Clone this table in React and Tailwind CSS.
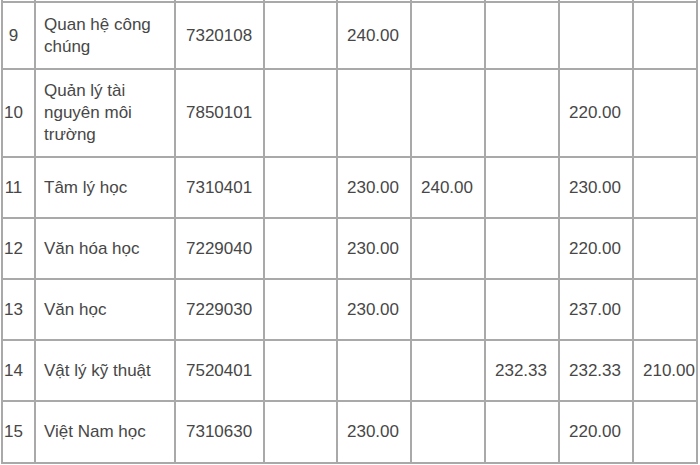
export default function App() {
  const rows = [
    { n: "9", name: ["Quan hệ công", "chúng"], code: "7320108", v: ["", "240.00", "", "", "", ""], h: "h-[65px]" },
    { n: "10", name: ["Quản lý tài", "nguyên môi", "trường"], code: "7850101", v: ["", "", "", "", "220.00", ""], h: "h-[86px]" },
    { n: "11", name: ["Tâm lý học"], code: "7310401", v: ["", "230.00", "240.00", "", "230.00", ""], h: "h-[59px]" },
    { n: "12", name: ["Văn hóa học"], code: "7229040", v: ["", "230.00", "", "", "220.00", ""], h: "h-[59px]" },
    { n: "13", name: ["Văn học"], code: "7229030", v: ["", "230.00", "", "", "237.00", ""], h: "h-[59px]" },
    { n: "14", name: ["Vật lý kỹ thuật"], code: "7520401", v: ["", "", "", "232.33", "232.33", "210.00"], h: "h-[59px]" },
    { n: "15", name: ["Việt Nam học"], code: "7310630", v: ["", "230.00", "", "", "220.00", ""], h: "h-[60px]" },
  ];
  const cell = "bg-white flex items-center whitespace-nowrap";
  return (
    <div className="w-[700px] h-[465px] bg-white overflow-hidden">
      <div
        className="ml-[1px] w-[697px] bg-[#a9a9a9] px-[2px] pb-[2px] grid grid-cols-[31px_138px_87px_71px_72px_72px_72px_72px_62px] gap-[2px] text-[17px] leading-[22px] text-[#474747]"
        style={{ fontFamily: '"Liberation Sans", Arial, sans-serif' }}
      >
        {Array.from({ length: 9 }).map((_, i) => (
          <div key={"t" + i} className="bg-white h-[1px]" />
        ))}
        {rows.map((r) => (
          <>
            <div key={r.n + "a"} className={`${cell} ${r.h} justify-center pr-[10px]`}>{r.n}</div>
            <div key={r.n + "b"} className={`${cell} ${r.h} pl-[8px]`}>
              <div>
                {r.name.map((l, i) => (
                  <div key={i}>{l}</div>
                ))}
              </div>
            </div>
            <div key={r.n + "c"} className={`${cell} ${r.h} pl-[10px]`}>{r.code}</div>
            {r.v.map((x, i) => (
              <div key={r.n + "v" + i} className={`${cell} ${r.h} pl-[9px]`}>{x}</div>
            ))}
          </>
        ))}
      </div>
    </div>
  );
}
